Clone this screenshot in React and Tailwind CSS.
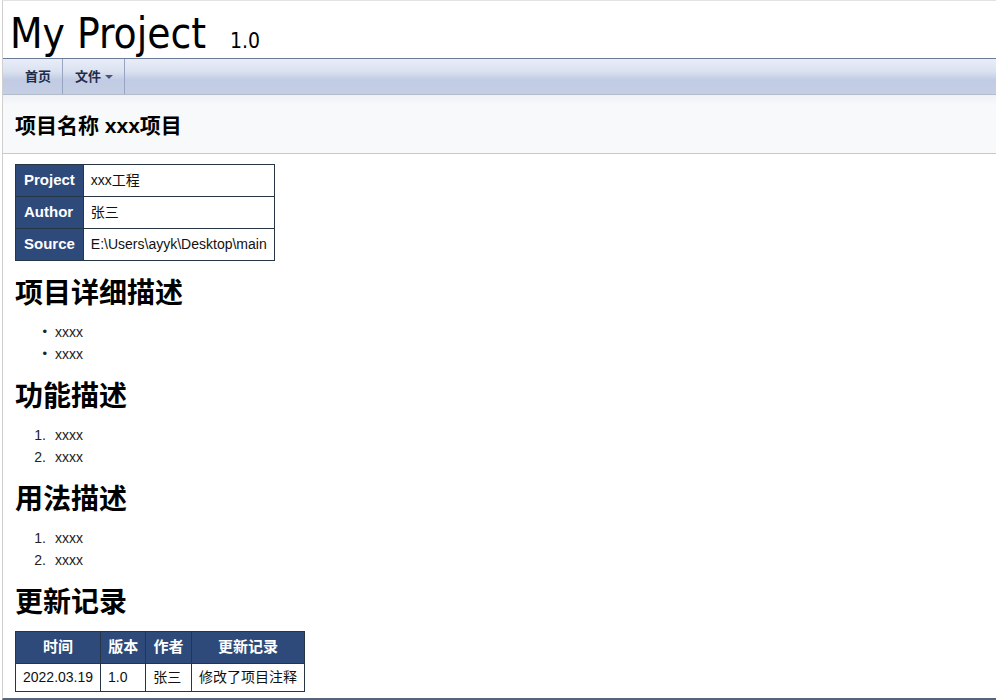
export default function App() {
  const cjk = { fontFamily: '"Liberation Sans", "Noto Sans CJK SC", sans-serif' };
  const h2 =
    "h-[34px] leading-[34px] text-[28px] font-bold text-black mb-[10px]";
  const info = [
    ["Project", "xxx工程"],
    ["Author", "张三"],
    ["Source", "E:\\Users\\ayyk\\Desktop\\main"],
  ];
  const thCell = "bg-[#2e4a7b] text-white font-bold text-[15px] border border-[#263645]";
  const tdCell = "bg-white text-[#111] text-[14px] border border-[#263645]";

  const Ul = ({ items }) => (
    <div className="flex flex-col">
      {items.map((t, i) => (
        <div key={i} className="flex h-[22px] items-center text-[14px] text-[#222]">
          <span className="w-[32px] text-right text-[13px]">•</span>
          <span className="ml-[8px]">{t}</span>
        </div>
      ))}
    </div>
  );
  const Ol = ({ items }) => (
    <div className="flex flex-col">
      {items.map((t, i) => (
        <div key={i} className="flex h-[22px] items-center text-[14px] text-[#222]">
          <span className="w-[31px] text-right">{i + 1}.</span>
          <span className="ml-[9px]">{t}</span>
        </div>
      ))}
    </div>
  );

  const titleFont = { fontFamily: '"DejaVu Sans Condensed", "DejaVu Sans", sans-serif' };

  return (
    <div className="w-[996px] h-[700px] bg-white pl-[2px]" style={cjk}>
      <div className="h-full border-l border-l-[#cfcfcf] border-t border-t-[#e2e2e2] border-b-2 border-b-[#56657a] flex flex-col">
        {/* title */}
        <div className="h-[57px] flex items-baseline pl-[7px] pt-[8px] overflow-hidden">
          <span className="text-[42px] leading-[49px] text-black" style={titleFont}>
            My Project
          </span>
          <span className="ml-[24px] text-[21px] text-black" style={titleFont}>
            1.0
          </span>
        </div>
        {/* nav */}
        <div className="h-[37px] border-t border-t-[#6c7b98] border-b border-b-[#b4bbc9] bg-[linear-gradient(to_bottom,#e9edf8_0%,#dbe2f0_35%,#c1cce4_60%,#c4cee5_100%)] flex pl-[10px]">
          <div className="pl-[12px] pr-[11px] flex items-center border-r border-r-[#97a5c3] text-[13px] font-bold text-[#1e2c48]">
            首页
          </div>
          <div className="pl-[12px] pr-[11px] flex items-center border-r border-r-[#97a5c3] text-[13px] font-bold text-[#1e2c48]">
            文件
            <svg width="8" height="5" viewBox="0 0 8 5" className="ml-[4px] mt-[1px]">
              <path d="M0 0 L8 0 L4 4 Z" fill="#4a5670" />
            </svg>
          </div>
        </div>
        {/* project name band */}
        <div className="h-[59px] border-b border-b-[#c9c9c9] bg-[linear-gradient(to_bottom,#eef1f6_0px,#f7f9fa_10px,#f8f9fa_100%)] flex items-center pl-[12px] pt-[3px]">
          <span className="text-[21px] font-bold text-black">项目名称 xxx项目</span>
        </div>

        <div className="pl-[12px] pt-[10px] flex flex-col">
          <table className="border-collapse w-[258px]">
            <tbody>
              {info.map(([k, v]) => (
                <tr key={k} className="h-[32px]">
                  <td className={`${thCell} w-[67px] px-[8px] text-left`}>{k}</td>
                  <td className={`${tdCell} px-[7px] whitespace-nowrap`}>{v}</td>
                </tr>
              ))}
            </tbody>
          </table>

          <div className={`${h2} mt-[16px]`}>项目详细描述</div>
          <Ul items={["xxxx", "xxxx"]} />

          <div className={`${h2} mt-[15px] mb-[10px]`}>功能描述</div>
          <Ol items={["xxxx", "xxxx"]} />

          <div className={`${h2} mt-[15px]`}>用法描述</div>
          <Ol items={["xxxx", "xxxx"]} />

          <div className={`${h2} mt-[15px] mb-[11px]`}>更新记录</div>
          <table className="border-collapse w-[290px]">
            <thead>
              <tr className="h-[32px]">
                <th className={`${thCell} w-[85px] text-[14px]`}>时间</th>
                <th className={`${thCell} w-[46px] text-[14px]`}>版本</th>
                <th className={`${thCell} w-[46px] text-[14px]`}>作者</th>
                <th className={`${thCell} text-[14px]`}>更新记录</th>
              </tr>
            </thead>
            <tbody>
              <tr className="h-[28px]">
                <td className={`${tdCell} px-[7px] whitespace-nowrap`}>2022.03.19</td>
                <td className={`${tdCell} px-[7px]`}>1.0</td>
                <td className={`${tdCell} px-[7px] whitespace-nowrap`}>张三</td>
                <td className={`${tdCell} px-[7px] whitespace-nowrap`}>修改了项目注释</td>
              </tr>
            </tbody>
          </table>
        </div>
      </div>
    </div>
  );
}
